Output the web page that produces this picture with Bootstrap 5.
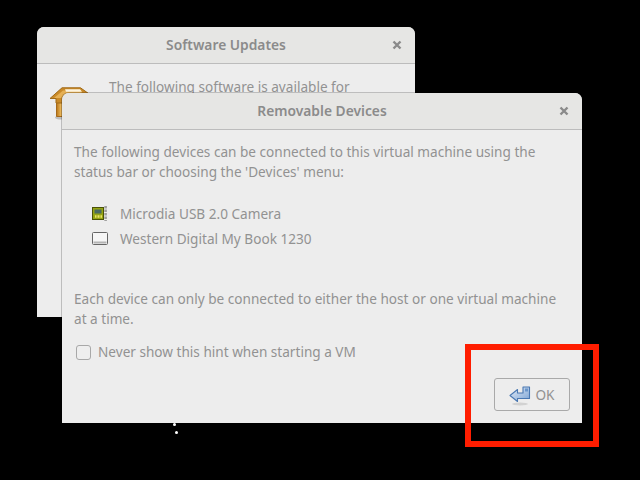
<!DOCTYPE html>
<html lang="en">
<head>
  <meta charset="UTF-8" />
  <title>Removable Devices</title>
  <link href="https://cdn.jsdelivr.net/npm/bootstrap@5.3.0/dist/css/bootstrap.min.css" rel="stylesheet" />
  <style>
    html, body { height: 100%; }
    body { background: #000; overflow: hidden; font-family: "Noto Sans", sans-serif; font-size: 13.6px; color: #929292; }
    .gwin { position: absolute; background: #ededed; border-radius: 7px 7px 0 0; overflow: hidden; }
    .win-back { left: 37px; top: 27px; width: 378px; height: 290px; }
    .win-front { left: 62px; top: 93px; width: 520px; height: 330px; box-shadow: 0 0 0 1px rgba(0, 0, 0, .2); }
    .gtitle { height: 37px; background: #e6e6e4; border-bottom: 1px solid #bcbcbc; font-weight: 600; color: #8b8b8b; font-size: 13.8px; position: relative; padding-top: 1px; }
    .gclose { position: absolute; right: 11px; top: 11px; }
    .win-body { padding: 12px 12px 12px; line-height: 20px; }
    .win-back .win-body { padding: 13px 24px 0 72px; }
    .back-icon { position: absolute; left: 12px; top: 60px; }
    .dev-list { padding: 22px 0 0 18px; gap: 5px; }
    .dev-row { height: 20px; }
    .dev-row span { margin-left: 12px; }
    .notice { margin-top: 40px; }
    .check-box { width: 15px; height: 15px; border: 1px solid #a8a8a8; border-radius: 3px; margin-left: 2px; background: #eee; }
    .hint-row { margin-top: 13px; gap: 7px; }
    .ok-btn { width: 76px; height: 33px; border: 1px solid #a9a9a9; border-radius: 3px; background: #ededed; color: #929292; font-size: 13.6px; padding: 0; }
    .red-frame { position: absolute; left: 465px; top: 344px; width: 134px; height: 103px; border: 6px solid #ff1d00; }
    .speck { position: absolute; width: 3px; height: 3px; border-radius: 50%; background: #fff; }
  </style>
</head>
<body>

  <div class="gwin win-back">
    <div class="gtitle d-flex align-items-center justify-content-center">
      Software Updates
      <svg class="gclose" width="14" height="14" viewBox="0 0 14 14"><path d="M3.5 3.5l7 7M10.5 3.5l-7 7" stroke="#8a8a8a" stroke-width="2.4"/></svg>
    </div>
    <div class="win-body">The following software is available for</div>
    <svg class="back-icon" width="44" height="34" viewBox="0 0 44 34">
      <defs>
        <linearGradient id="boxGold" x1="0" y1="0" x2="1" y2="0">
          <stop offset="0" stop-color="#b87416"/><stop offset="0.5" stop-color="#e8b558"/><stop offset="1" stop-color="#9c6010"/>
        </linearGradient>
      </defs>
      <ellipse cx="12" cy="30.5" rx="6" ry="2" fill="#bdbdbd"/>
      <path d="M7.5 14h8.5v15.5H7.5z" fill="url(#boxGold)" stroke="#a5691a"/>
      <path d="M1 11.5L13 .8h18.5L43 9v3H16v4H7v-4.5z" fill="#c98a28" stroke="#a06a18"/>
      <path d="M5 11L14 3.5h16L36 8H15l-3 3z" fill="#e6b054"/>
      <path d="M16 2.2h15l2 2.5H17z" fill="#fdf4df"/>
    </svg>
  </div>

  <div class="gwin win-front d-flex flex-column">
    <div class="gtitle d-flex align-items-center justify-content-center flex-shrink-0">
      Removable Devices
      <svg class="gclose" width="14" height="14" viewBox="0 0 14 14"><path d="M3.5 3.5l7 7M10.5 3.5l-7 7" stroke="#8a8a8a" stroke-width="2.4"/></svg>
    </div>
    <div class="win-body d-flex flex-column flex-grow-1">
      <div>The following devices can be connected to this virtual machine using the<br>status bar or choosing the 'Devices' menu:</div>
      <div class="dev-list d-flex flex-column">
        <div class="dev-row d-flex align-items-center">
          <svg width="16" height="16" viewBox="0 0 16 16">
            <rect x="0.5" y="1.5" width="11" height="12" fill="#95a512" stroke="#4a5208"/>
            <rect x="2.5" y="3.5" width="7" height="4" fill="#4a6a60"/>
            <path d="M3 10.5h7" stroke="#ece468" stroke-width="2.4" stroke-dasharray="1 .5"/>
            <path d="M13.6 0v15" stroke="#a0a0a0" stroke-width="2.6" stroke-dasharray="2.5 1"/>
          </svg>
          <span>Microdia USB 2.0 Camera</span>
        </div>
        <div class="dev-row d-flex align-items-center">
          <svg width="16" height="16" viewBox="0 0 16 16">
            <rect x="0.5" y="1.5" width="15" height="12" rx="1" fill="#f6f6f6" stroke="#666"/>
            <rect x="1.5" y="10.5" width="13" height="2" fill="#b4b4b4"/>
          </svg>
          <span>Western Digital My Book 1230</span>
        </div>
      </div>
      <div class="notice">Each device can only be connected to either the host or one virtual machine<br>at a time.</div>
      <div class="hint-row d-flex align-items-center">
        <span class="check-box"></span>
        <span>Never show this hint when starting a VM</span>
      </div>
      <div class="d-flex justify-content-end mt-auto">
        <button class="ok-btn d-flex align-items-center justify-content-center gap-1" type="button">
          <svg width="22" height="22" viewBox="0 0 22 22">
            <defs>
              <linearGradient id="arrowBlue" x1="0" y1="0" x2="1" y2="1">
                <stop offset="0" stop-color="#e6eef8"/><stop offset="1" stop-color="#7ba3d4"/>
              </linearGradient>
            </defs>
            <ellipse cx="11" cy="20" rx="8" ry="1.5" fill="#d2d2d2"/>
            <path d="M1 11.5l7.5-6V9H14V3h6.5v11.5h-12v3z" fill="url(#arrowBlue)" stroke="#4a78b2" stroke-width="1.1" stroke-linejoin="round"/>
            <path d="M16 4.5h3v3h-3z" fill="#6b96cb"/>
          </svg>
          OK
        </button>
      </div>
    </div>
  </div>

  <div class="red-frame"></div>
  <span class="speck" style="left:173px;top:423px"></span>
  <span class="speck" style="left:175px;top:431px"></span>

  <script src="https://cdn.jsdelivr.net/npm/bootstrap@5.3.0/dist/js/bootstrap.bundle.min.js"></script>
</body>
</html>
